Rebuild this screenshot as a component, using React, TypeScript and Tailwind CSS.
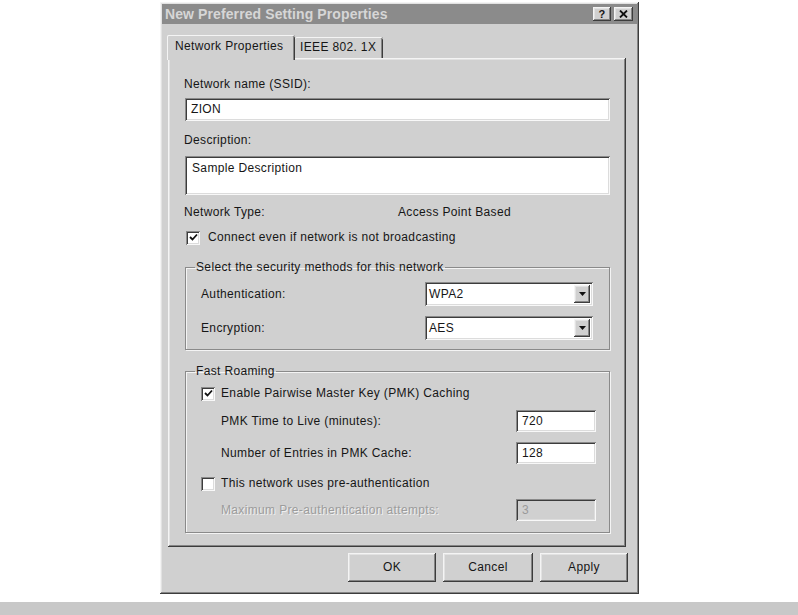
const RAISED =
  'shadow-[inset_-1px_-1px_0_#3c3c3c,inset_1px_1px_0_#f4f4f4,inset_-2px_-2px_0_#858585,inset_2px_2px_0_#e2e2e2]';
const SUNKEN =
  'shadow-[inset_1px_1px_0_#8a8a8a,inset_-1px_-1px_0_#f8f8f8,inset_2px_2px_0_#3c3c3c,inset_-2px_-2px_0_#dcdcdc]';

function CheckBox({ checked }: { checked?: boolean }) {
  return (
    <span className={`w-[14px] h-[14px] bg-white shrink-0 flex items-center justify-center ${SUNKEN}`}>
      {checked && (
        <svg width="9" height="9" viewBox="0 0 9 9">
          <path d="M1 4 L3.5 6.5 L8 1.5" fill="none" stroke="#111" strokeWidth="1.8" />
        </svg>
      )}
    </span>
  );
}

function TextBox({ value, disabled, className = '' }: { value: string; disabled?: boolean; className?: string }) {
  return (
    <div
      className={`${SUNKEN} ${disabled ? 'bg-[#d0d0d0] text-[#9a9a9a]' : 'bg-white'} pl-[6px] flex items-center ${className}`}
    >
      {value}
    </div>
  );
}

function Select({ value }: { value: string }) {
  return (
    <div className={`${SUNKEN} bg-white w-[168px] h-[24px] flex items-center pl-[4px] pr-[3px]`}>
      <span className="flex-1">{value}</span>
      <span className={`${RAISED} bg-[#d0d0d0] w-[16px] h-[18px] flex items-center justify-center`}>
        <svg width="7" height="4" viewBox="0 0 7 4">
          <path d="M0 0 H7 L3.5 4 Z" fill="#111" />
        </svg>
      </span>
    </div>
  );
}

function Button({ label, w }: { label: string; w: string }) {
  return (
    <div className={`${RAISED} ${w} h-[29px] flex items-center justify-center bg-[#d0d0d0]`}>{label}</div>
  );
}

export default function App() {
  return (
    <div className="w-[798px] h-[615px] bg-white flex flex-col font-['Liberation_Sans',Arial,sans-serif] text-[12px] leading-[15px] tracking-[0.35px] text-[#161616]">
      {/* dialog window */}
      <div className={`ml-[160px] mt-[2px] w-[479px] h-[592px] bg-[#d0d0d0] p-[2px] flex flex-col ${RAISED}`}>
        {/* title bar */}
        <div className="h-[20px] bg-[#8b8b8b] flex items-center pl-[3px] pr-[4px]">
          <span className="flex-1 font-bold text-[14px] text-[#d6d6d6] tracking-[0.1px]">
            New Preferred Setting Properties
          </span>
          <div className="flex gap-[3px]">
            <span className={`${RAISED} bg-[#d0d0d0] w-[18px] h-[14px] flex items-center justify-center font-bold text-[11px] leading-none`}>
              ?
            </span>
            <span className={`${RAISED} bg-[#d0d0d0] w-[19px] h-[14px] flex items-center justify-center`}>
              <svg width="9" height="8" viewBox="0 0 9 8">
                <path d="M1 0.5 L8 7.5 M8 0.5 L1 7.5" stroke="#111" strokeWidth="1.8" />
              </svg>
            </span>
          </div>
        </div>

        {/* tabs */}
        <div className="flex items-end ml-[5px] mt-[11px] h-[23px]">
          <div className="relative z-10 h-[25px] -mb-[2px] w-[128px] bg-[#d0d0d0] rounded-t-[2px] shadow-[inset_1px_0_0_#f4f4f4,inset_0_1px_0_#f4f4f4,inset_-1px_0_0_#3c3c3c,inset_-2px_0_0_#858585] flex items-start pt-[4px] pl-[8px]">
            Network Properties
          </div>
          <div className="h-[21px] w-[88px] bg-[#d0d0d0] rounded-t-[2px] shadow-[inset_0_1px_0_#f4f4f4,inset_-1px_0_0_#3c3c3c,inset_-2px_0_0_#858585] flex items-start pt-[3px] pl-[5px]">
            IEEE 802. 1X
          </div>
        </div>

        {/* tab panel */}
        <div className={`${RAISED} ml-[6px] w-[458px] h-[489px] pt-[19px] px-[16px] flex flex-col`}>
          <div>Network name (SSID):</div>
          <TextBox value="ZION" className="mt-[6px] h-[23px] w-[425px] ml-[1px]" />

          <div className="mt-[12px]">Description:</div>
          <div className={`${SUNKEN} bg-white mt-[8px] h-[39px] w-[425px] ml-[1px] pl-[7px] pt-[5px]`}>
            Sample Description
          </div>

          <div className="mt-[10px] flex">
            <span className="w-[214px]">Network Type:</span>
            <span>Access Point Based</span>
          </div>

          <div className="mt-[10px] flex items-center gap-[8px] ml-[2px]">
            <CheckBox checked />
            <span>Connect even if network is not broadcasting</span>
          </div>

          <fieldset className="mt-[15px] ml-[1px] w-[425px] border border-[#8a8a8a] shadow-[inset_1px_1px_0_#f4f4f4,1px_1px_0_#f4f4f4]">
            <legend className="ml-[9px] px-[1px] leading-[14px]">Select the security methods for this network</legend>
            <div className="pl-[15px] pr-[16px] pt-[8px] pb-[9px] flex flex-col gap-[10px]">
              <div className="flex items-center justify-between">
                <span>Authentication:</span>
                <Select value="WPA2" />
              </div>
              <div className="flex items-center justify-between">
                <span>Encryption:</span>
                <Select value="AES" />
              </div>
            </div>
          </fieldset>

          <fieldset className="mt-[14px] ml-[1px] w-[425px] border border-[#8a8a8a] shadow-[inset_1px_1px_0_#f4f4f4,1px_1px_0_#f4f4f4]">
            <legend className="ml-[9px] px-[1px] leading-[14px]">Fast Roaming</legend>
            <div className="pl-[15px] pr-[13px] pt-[8px] pb-[11px] flex flex-col">
              <div className="flex items-center gap-[6px]">
                <CheckBox checked />
                <span>Enable Pairwise Master Key (PMK) Caching</span>
              </div>
              <div className="mt-[9px] flex items-center justify-between pl-[20px]">
                <span>PMK Time to Live (minutes):</span>
                <TextBox value="720" className="w-[80px] h-[22px]" />
              </div>
              <div className="mt-[10px] flex items-center justify-between pl-[20px]">
                <span>Number of Entries in PMK Cache:</span>
                <TextBox value="128" className="w-[80px] h-[22px]" />
              </div>
              <div className="mt-[12px] flex items-center gap-[6px]">
                <CheckBox />
                <span>This network uses pre-authentication</span>
              </div>
              <div className="mt-[8px] flex items-center justify-between pl-[20px]">
                <span className="text-[#9c9c9c] [text-shadow:1px_1px_0_#f0f0f0]">
                  Maximum Pre-authentication attempts:
                </span>
                <TextBox value="3" disabled className="w-[80px] h-[22px]" />
              </div>
            </div>
          </fieldset>
        </div>

        {/* buttons */}
        <div className="mt-[6px] mr-[9px] flex justify-end gap-[7px]">
          <Button label="OK" w="w-[88px]" />
          <Button label="Cancel" w="w-[90px]" />
          <Button label="Apply" w="w-[88px]" />
        </div>
      </div>

      <div className="mt-auto h-[13px] bg-[#c8c8c8]" />
    </div>
  );
}
